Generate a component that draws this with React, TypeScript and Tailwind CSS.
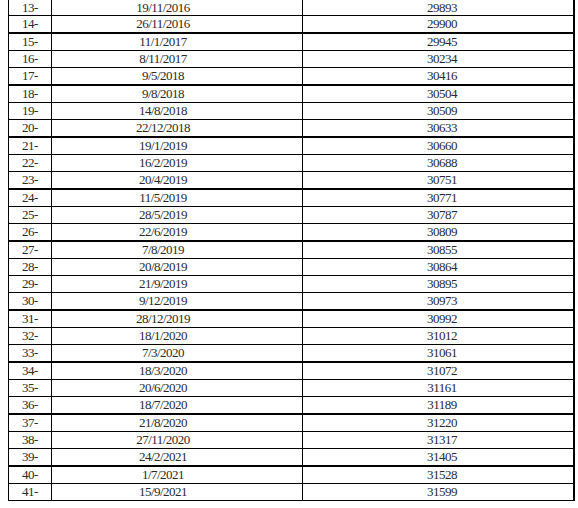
const rows: [string, string, string][] = [
  ["13-", "19/11/2016", "29893"],
  ["14-", "26/11/2016", "29900"],
  ["15-", "11/1/2017", "29945"],
  ["16-", "8/11/2017", "30234"],
  ["17-", "9/5/2018", "30416"],
  ["18-", "9/8/2018", "30504"],
  ["19-", "14/8/2018", "30509"],
  ["20-", "22/12/2018", "30633"],
  ["21-", "19/1/2019", "30660"],
  ["22-", "16/2/2019", "30688"],
  ["23-", "20/4/2019", "30751"],
  ["24-", "11/5/2019", "30771"],
  ["25-", "28/5/2019", "30787"],
  ["26-", "22/6/2019", "30809"],
  ["27-", "7/8/2019", "30855"],
  ["28-", "20/8/2019", "30864"],
  ["29-", "21/9/2019", "30895"],
  ["30-", "9/12/2019", "30973"],
  ["31-", "28/12/2019", "30992"],
  ["32-", "18/1/2020", "31012"],
  ["33-", "7/3/2020", "31061"],
  ["34-", "18/3/2020", "31072"],
  ["35-", "20/6/2020", "31161"],
  ["36-", "18/7/2020", "31189"],
  ["37-", "21/8/2020", "31220"],
  ["38-", "27/11/2020", "31317"],
  ["39-", "24/2/2021", "31405"],
  ["40-", "1/7/2021", "31528"],
  ["41-", "15/9/2021", "31599"],
];

// rows followed by a heavier rule
const thick = new Set(["14-", "17-", "20-", "23-", "26-", "30-", "33-", "36-", "39-"]);

export default function App() {
  return (
    <div className="w-[578px] h-[508px] bg-white overflow-hidden">
      <div
        className="ml-[8px] w-[567px] border-l border-r-2 border-black text-[13px] tracking-[-0.5px] text-[#2a2a2a]"
        style={{ fontFamily: '"Liberation Serif", "Times New Roman", serif' }}
      >
        {rows.map(([n, date, val], i) => (
          <div
            key={n}
            className={`flex border-black ${thick.has(n) ? "border-b-2" : "border-b"}`}
          >
            <div
              className={`w-[43px] shrink-0 border-r border-black text-center ${
                i === 0 ? "h-[15px] leading-[15px]" : "h-[16px] leading-[16px]"
              }`}
            >
              {n}
            </div>
            <div
              className={`w-[251px] shrink-0 border-r border-black text-center pr-[28px] ${
                i === 0 ? "leading-[15px]" : "leading-[16px]"
              }`}
            >
              {date}
            </div>
            <div
              className={`flex-1 text-center pl-[8px] ${
                i === 0 ? "leading-[15px]" : "leading-[16px]"
              }`}
            >
              {val}
            </div>
          </div>
        ))}
      </div>
    </div>
  );
}
